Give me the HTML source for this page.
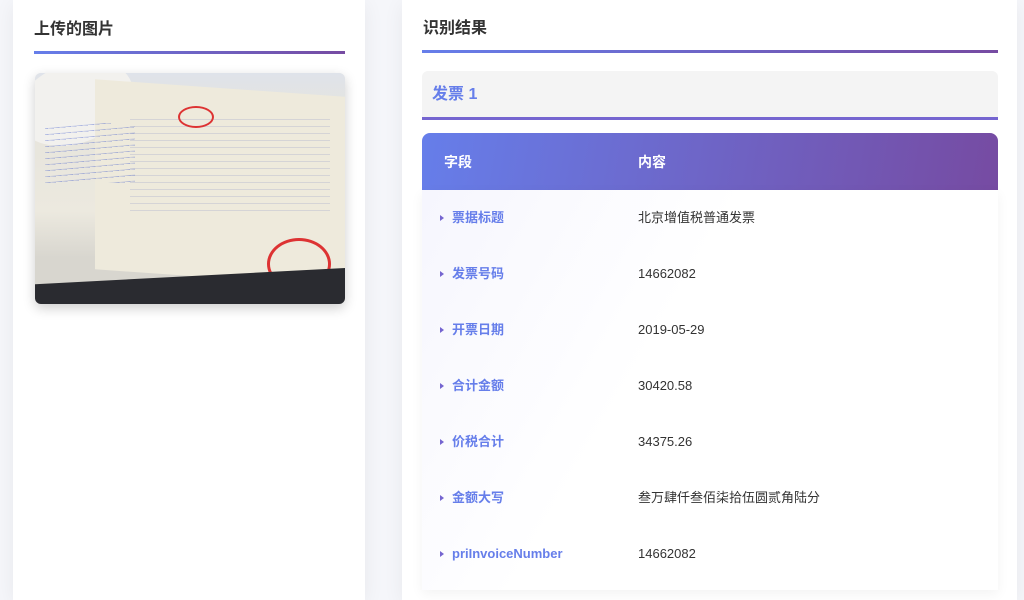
<!DOCTYPE html>
<html><head><meta charset="utf-8"><style>
*{margin:0;padding:0;box-sizing:border-box}
body{width:1024px;height:563px;overflow:hidden;background:#f5f6fa;font-family:"Liberation Sans","Noto Sans CJK SC",sans-serif;position:relative}
.card{position:absolute;top:0;height:600px;background:#fff;box-shadow:0 4px 20px rgba(0,0,0,.06)}
h2{position:absolute;font-size:16px;font-weight:bold;color:#333;line-height:20px}
.line{position:absolute;height:3px;background:linear-gradient(90deg,#667eea,#764ba2)}
.img{position:absolute;left:35px;top:73px;width:310px;height:231px;border-radius:6px;overflow:hidden;box-shadow:0 4px 12px rgba(0,0,0,.2);background:#e8e6e0}
.inv{position:absolute;left:422px;top:71px;width:576px;height:49px;background:#f4f4f4;border-radius:6px 6px 0 0;border-bottom:3px solid #7565d0}
.inv span{position:absolute;left:10px;top:14px;font-size:16px;line-height:20px;font-weight:bold;color:#667eea}
.thead{position:absolute;left:422px;top:133px;width:576px;height:57px;border-radius:8px 8px 0 0;background:linear-gradient(100deg,#667eea,#764ba2);color:#fff;font-weight:bold;font-size:14px;line-height:18px}
.tbody{position:absolute;left:422px;top:190px;width:576px;height:400px;background:linear-gradient(120deg,#f6f6fe,#fff 40%);box-shadow:0 4px 12px rgba(0,0,0,.05)}
.row{position:absolute;left:0;width:576px;height:56px;font-size:13px}
.f,.v{position:absolute;top:19px;height:18px;line-height:18px;display:flex;align-items:center}
.f{left:18px;color:#667eea;font-weight:bold}
.f:before{content:"";display:inline-block;border-left:4px solid #7565d0;border-top:3px solid transparent;border-bottom:3px solid transparent;margin-right:8px}
.v{left:216px;color:#333}
</style></head><body>
<div class="card" style="left:13px;width:352px"></div>
<div class="card" style="left:402px;width:615px"></div>
<h2 style="left:34px;top:20px">上传的图片</h2>
<div class="line" style="left:34px;top:51px;width:311px"></div>
<div class="img">
<div style="position:absolute;left:0;top:0;width:310px;height:231px;background:linear-gradient(180deg,#dfe3ea 0,#e6e4dc 20%,#ece9df 60%,#d8d6cf 80%)"></div>
<div style="position:absolute;left:-20px;top:-10px;width:120px;height:80px;background:#f2f1ee;border-radius:50%;transform:rotate(-20deg)"></div>
<div style="position:absolute;left:60px;top:15px;width:250px;height:190px;background:#eeeadc;transform:skewY(4deg)"></div>
<div style="position:absolute;left:95px;top:40px;width:200px;height:100px;background:repeating-linear-gradient(180deg,transparent 0,transparent 6px,rgba(70,90,180,.3) 7px)"></div>
<div style="position:absolute;left:10px;top:50px;width:90px;height:60px;background:repeating-linear-gradient(175deg,transparent 0,transparent 5px,rgba(40,70,200,.5) 6px)"></div>
<div style="position:absolute;left:143px;top:33px;width:36px;height:22px;border:2px solid #d33;border-radius:50%"></div>
<div style="position:absolute;left:232px;top:165px;width:64px;height:52px;border:3px solid #d33;border-radius:50%"></div>
<div style="position:absolute;left:0;top:195px;width:310px;height:36px;background:#2a2b30;transform:skewY(-3deg);transform-origin:right"></div>
</div>
<h2 style="left:423px;top:19px">识别结果</h2>
<div class="line" style="left:422px;top:50px;width:576px"></div>
<div class="inv"><span>发票 1</span></div>
<div class="thead"><span style="position:absolute;left:22px;top:20px">字段</span><span style="position:absolute;left:216px;top:20px">内容</span></div>
<div class="tbody">
<div class="row" style="top:0"><span class="f">票据标题</span><span class="v">北京增值税普通发票</span></div>
<div class="row" style="top:56px"><span class="f">发票号码</span><span class="v">14662082</span></div>
<div class="row" style="top:112px"><span class="f">开票日期</span><span class="v">2019-05-29</span></div>
<div class="row" style="top:168px"><span class="f">合计金额</span><span class="v">30420.58</span></div>
<div class="row" style="top:224px"><span class="f">价税合计</span><span class="v">34375.26</span></div>
<div class="row" style="top:280px"><span class="f">金额大写</span><span class="v">叁万肆仟叁佰柒拾伍圆贰角陆分</span></div>
<div class="row" style="top:336px"><span class="f">priInvoiceNumber</span><span class="v">14662082</span></div>
</div>
</body></html>
